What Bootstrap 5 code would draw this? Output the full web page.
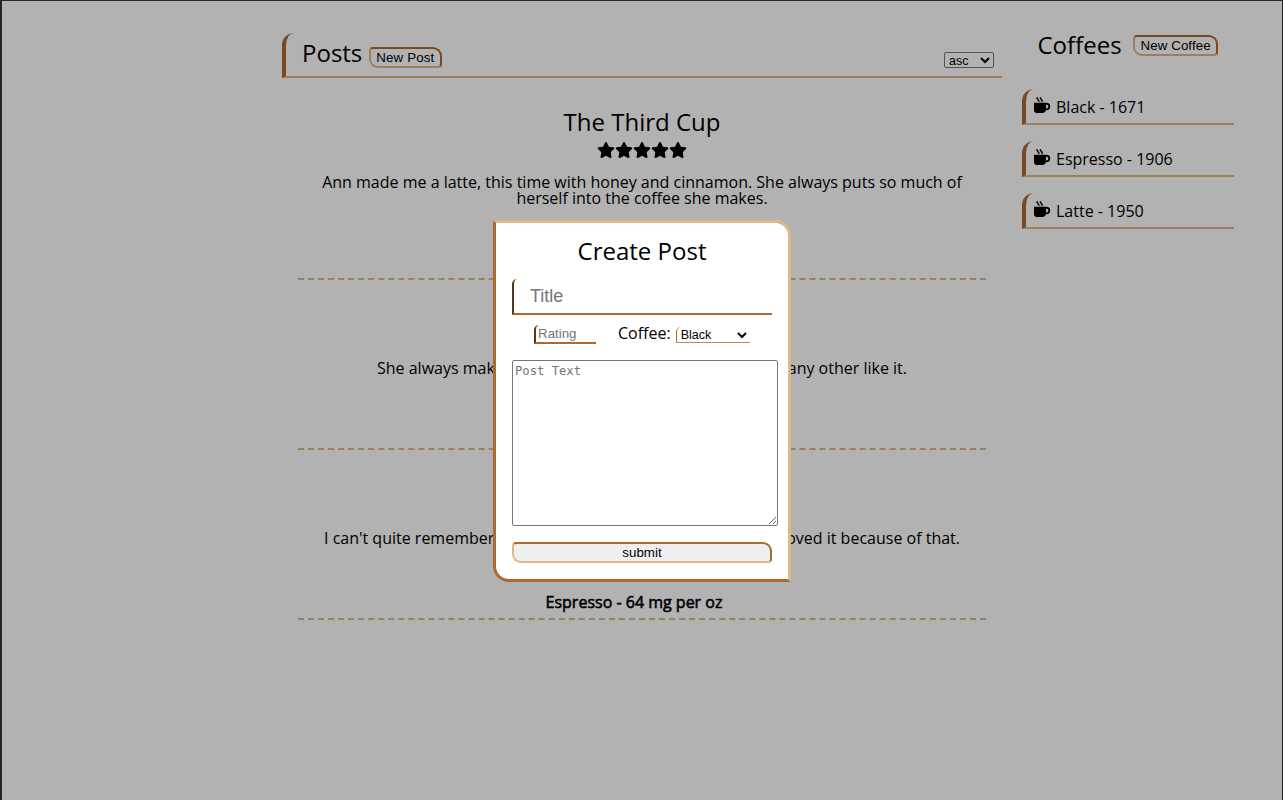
<!DOCTYPE html>
<html lang="en">
<head>
<meta charset="utf-8">
<title>Coffee Posts</title>
<link href="https://cdn.jsdelivr.net/npm/bootstrap@5.3.0/dist/css/bootstrap.min.css" rel="stylesheet">
<style>
:root{--tan:#deb887;--brown:#ad6932;--dark:#56361b}
body{font:16px/16px "Open Sans",sans-serif;color:#000;background:#fff}
.frame{height:800px;border:solid #252328;border-width:1px 1px 0 2px;overflow:hidden}
h1,h2,h3{font-size:24px;font-weight:400;line-height:32px;margin:0}
.feed{width:720px;margin-left:280px}
.feed-head{height:45px;margin-top:32px;padding:0 8px 0 16px;border-left:4px solid var(--brown);border-bottom:2px solid var(--tan);border-top-left-radius:12px}
.chip{height:21px;padding:0 5px;font:13.33px/16px "Liberation Sans",sans-serif;color:#000;background:transparent;border:2px solid;border-color:var(--brown) var(--brown) var(--tan) var(--tan);border-radius:4px 9px 4px 9px}
.chip.wide{background:#efefef}
.chip-post{width:73px;margin:14px 0 0 7px;letter-spacing:.12px;text-align:left}
.chip-coffee{width:85px;margin:6px 0 0 11.5px;letter-spacing:.08px}
select{font:13.33px "Liberation Sans",sans-serif;color:#000;background:#fff}
.sort{width:50px;height:16px;padding:0;border:1px solid #767676;border-radius:2px;font-size:12.5px;line-height:14px;margin-top:19px}
.entry{height:170px;margin:0 16px;border-bottom:2px dashed var(--tan);text-align:center}
.entry.first{margin-top:32px}
.entry h2{line-height:24px}
.entry .split{height:16px;margin-left:auto;margin-right:auto}
.stars{padding-top:8px;height:26px}
.stars svg{width:18px;height:16px}
.caffeine{-webkit-text-stroke:.55px #000;padding-right:16px}
.side{width:212px;margin-left:20px;padding-top:28px}
.brew{height:36px;margin-bottom:16px;padding:1px 0 0 8px;border-left:4px solid var(--brown);border-bottom:2px solid var(--tan);border-top-left-radius:12px}
.brew svg{width:18px;height:18px;margin:0 4px 1px 0}
.shade{background:rgba(0,0,0,.3)}
.dialog-box{width:298px;height:362px;margin-top:219px;margin-left:491px;padding:15px 16px;background:#fff;border:3px solid;border-color:var(--tan) var(--tan) var(--brown) var(--brown);border-radius:3px 16px 3px 16px}
input,textarea{color:#000;outline:0}
input{border:0 solid;border-left:2px solid var(--dark);border-bottom:2px solid var(--brown);border-top-left-radius:5px;font-family:"Liberation Sans",sans-serif}
::placeholder{color:#757575;opacity:1}
.title-in{width:260px;height:36px;padding:1px 16px 0;font-size:18px}
.rate-in{width:62px;height:19px;padding:0 2px;font-size:13.33px}
.kind{width:74px;height:16px;border:0 solid;border-left:1px solid var(--brown);border-bottom:1px solid #c8875a;border-top-left-radius:5px;font-size:12.5px;padding:0}
textarea{width:266px;height:166px;padding:3px 2px 2px;border:1px solid #767676;border-radius:2px;font:12.2px/15px "DejaVu Sans Mono",monospace;display:block}
</style>
</head>
<body>
<svg class="d-none"><defs>
<symbol id="star" viewBox="0 0 576 512"><path d="M316.9 18C311.6 7 300.4 0 288.1 0s-23.400 7-28.800 18L195 150.300 51.400 171.500c-12 1.800-22 10.200-25.700 21.700s-.7 24.200 7.900 32.700L137.800 329 113.200 474.700c-2 12 3 24.200 12.900 31.300s23 8 33.800 2.300l128.300-68.500 128.300 68.500c10.800 5.700 23.900 4.900 33.800-2.300s14.900-19.300 12.900-31.300L438.500 329 542.700 225.900c8.600-8.500 11.700-21.200 7.900-32.700s-13.700-19.900-25.700-21.700L381.200 150.300 316.900 18z"/></symbol>
<symbol id="cup" viewBox="0 0 18 18"><path d="M0 5.800h12.500a3.600 3.600 0 0 1 0 7.400h-.7a3 3 0 0 1-2.800 2.800H3a3 3 0 0 1-3-3zM12 7.700v3.700h.5a1.850 1.850 0 0 0 0-3.700z" fill-rule="evenodd"/><path d="M2.900.3c.1 2.200 1.900 2 2.100 4.500M6.300.3c.1 2.200 1.900 2 2.100 4.500" fill="none" stroke="#000" stroke-width="1.500"/></symbol>
</defs></svg>
<div class="frame position-relative">
  <div class="d-flex">
    <main class="feed">
      <header class="feed-head d-flex justify-content-between align-items-start">
        <div class="d-flex"><h1 class="mt-1">Posts</h1><button class="chip chip-post">New Post</button></div>
        <select class="sort"><option>asc</option></select>
      </header>
      <article class="entry first">
        <h2>The Third Cup</h2>
        <div class="stars d-flex justify-content-center"><svg><use href="#star"/></svg><svg><use href="#star"/></svg><svg><use href="#star"/></svg><svg><use href="#star"/></svg><svg><use href="#star"/></svg></div>
        <p class="m-0 px-3" style="padding-top:14px">Ann made me a latte, this time with honey and cinnamon. She always puts so much of herself into the coffee she makes.</p>
      </article>
      <article class="entry" style="padding-top:80px"><p class="split d-flex justify-content-between mb-0" style="width:530px"><span>She always makes</span><span>any other like it.</span></p></article>
      <article class="entry" style="padding-top:80px"><p class="split d-flex justify-content-between" style="width:636px;margin-bottom:48px"><span>I can't quite remember</span><span>loved it because of that.</span></p><div class="caffeine">Espresso - 64 mg per oz</div></article>
    </main>
    <aside class="side">
      <div class="d-flex mb-0" style="height:60px;padding-left:15.5px"><h2>Coffees</h2><button class="chip chip-coffee">New Coffee</button></div>
      <div class="brew d-flex align-items-center"><svg><use href="#cup"/></svg>Black - 1671</div>
      <div class="brew d-flex align-items-center"><svg><use href="#cup"/></svg>Espresso - 1906</div>
      <div class="brew d-flex align-items-center"><svg><use href="#cup"/></svg>Latte - 1950</div>
    </aside>
  </div>
  <div class="shade position-absolute top-0 start-0 w-100 h-100 overflow-hidden">
    <form class="dialog-box">
      <h3 class="text-center" style="line-height:25px;margin-bottom:16px">Create Post</h3>
      <input class="title-in d-block" placeholder="Title">
      <div class="d-flex align-items-start" style="padding:10px 0 0 22px;height:45px"><input class="rate-in" placeholder="Rating"><label style="margin-left:22px">Coffee:</label><select class="kind" style="margin:2px 0 0 5px"><option>Black</option></select></div>
      <textarea placeholder="Post Text"></textarea>
      <button type="button" class="chip wide d-block w-100" style="margin-top:16px">submit</button>
    </form>
  </div>
</div>
<script src="https://cdn.jsdelivr.net/npm/bootstrap@5.3.0/dist/js/bootstrap.bundle.min.js"></script>
</body>
</html>
